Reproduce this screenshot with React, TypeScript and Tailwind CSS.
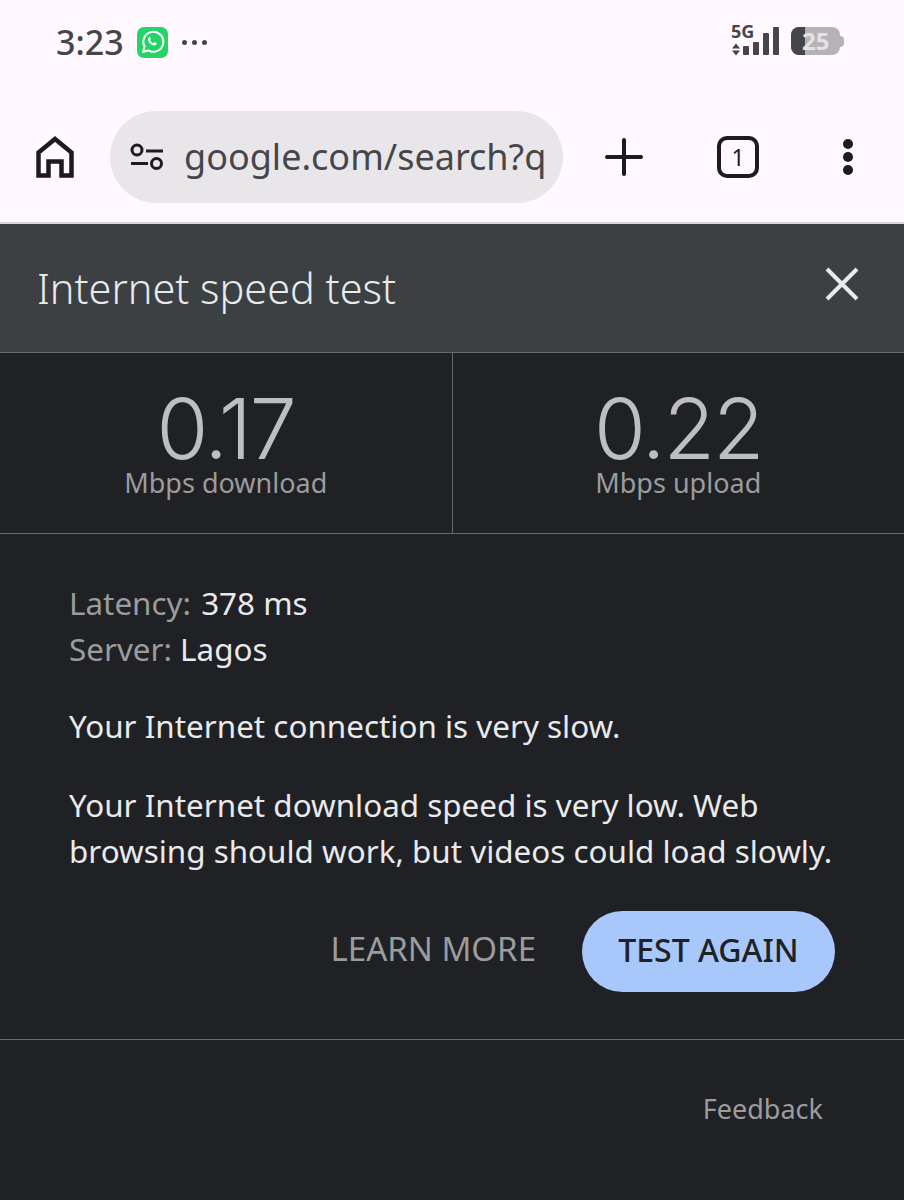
function WhatsAppIcon() {
  return (
    <svg width="31" height="31" viewBox="0 0 31 31">
      <rect width="31" height="31" rx="7" fill="#25d366" />
      <path d="M6 25l1.600-5.400A10 10 0 1 1 11.300 23.400z" fill="none" stroke="#fff" strokeWidth="2" strokeLinejoin="round" />
      <path d="M12 10.500c-1.600 1-1.300 3 .6 5.200 2 2.200 4.300 3.400 6 2.400.8-.5 1.100-1.300 1-1.800l-2.400-1.200-1 1.100c-1.300-.5-2.500-1.700-3.200-3l.9-1-1-2.500c-.3-.1-.6 0-.9-.2z" fill="#fff" />
    </svg>
  )
}

function SignalIcon() {
  return (
    <svg width="48" height="30" viewBox="0 0 48 30" fill="#46464a">
      <path d="M5 16.500l-4 5h8zM5 28.500l-4-5h8z" />
      <rect x="12" y="19" width="6" height="9" rx="1" />
      <rect x="22" y="15" width="6" height="13" rx="1" />
      <rect x="32" y="6" width="6" height="22" rx="1" />
      <rect x="42" y="0" width="6" height="28" rx="1" />
    </svg>
  )
}

function HomeIcon() {
  return (
    <svg width="38" height="42" viewBox="0 0 38 42" fill="none" stroke="#1d1b20" strokeWidth="4.500">
      <path d="M2.500 39.500V16.500L19 3l16.500 13.500v23h-10v-14h-13v14z" />
    </svg>
  )
}

function SiteIcon() {
  return (
    <svg width="34" height="28" viewBox="0 0 34 28" fill="none" stroke="#1d1b20" strokeWidth="3">
      <circle cx="7" cy="7" r="5" />
      <circle cx="26.500" cy="20.500" r="5" />
      <path d="M16 8h17M1 20.500h17" />
    </svg>
  )
}

function PlusIcon() {
  return (
    <svg width="38" height="38" viewBox="0 0 38 38" stroke="#1d1b20" strokeWidth="4" strokeLinecap="round">
      <path d="M19 2v34M2 19h34" />
    </svg>
  )
}

function CloseIcon() {
  return (
    <svg className="-mt-[8px]" width="34" height="34" viewBox="0 0 34 34" stroke="#e8eaed" strokeWidth="4">
      <path d="M2 2l30 30M32 2L2 32" />
    </svg>
  )
}

function MenuDots() {
  return (
    <div className="flex flex-col gap-[3px]">
      <span className="h-[10px] w-[10px] rounded-full bg-[#1d1b20]" />
      <span className="h-[10px] w-[10px] rounded-full bg-[#1d1b20]" />
      <span className="h-[10px] w-[10px] rounded-full bg-[#1d1b20]" />
    </div>
  )
}

function Battery() {
  return (
    <div className="relative flex h-[28px] w-[53px] items-center">
      <div className="flex h-[28px] w-[49px] overflow-hidden rounded-[8px] bg-[#b5b3b7]">
        <div className="h-full w-[14px] bg-[#46464a]" />
      </div>
      <div className="h-[11px] w-[4px] rounded-r-full bg-[#b5b3b7]" />
      <span className="absolute left-[11px] top-0 text-[24px] font-bold leading-[28px] text-[#e4e2e6]">25</span>
    </div>
  )
}

export default function App() {
  return (
    <div className="flex min-h-[1200px] w-[904px] flex-col bg-[#202124] font-[family-name:'Noto_Sans',sans-serif]">
      <div className="bg-[#fff9ff]">
        <div className="flex h-[111px] items-start justify-between pl-[56px] pr-[60px] pt-[27px]">
          <div className="flex items-center">
            <span className="text-[34px] font-medium leading-[31px] text-[#46464a]">3:23</span>
            <div className="ml-[13px]"><WhatsAppIcon /></div>
            <div className="ml-[14px] flex gap-[5px]">
              <span className="h-[5px] w-[5px] rounded-full bg-[#46464a]" />
              <span className="h-[5px] w-[5px] rounded-full bg-[#46464a]" />
              <span className="h-[5px] w-[5px] rounded-full bg-[#46464a]" />
            </div>
          </div>
          <div className="flex items-start gap-[12px]">
            <div className="relative">
              <SignalIcon />
              <span className="absolute left-0 top-[-7px] text-[18px] font-bold leading-[22px] text-[#46464a]">5G</span>
            </div>
            <Battery />
          </div>
        </div>
        <div className="flex h-[92px] items-center">
          <div className="ml-[36px]"><HomeIcon /></div>
          <div className="ml-[36px] flex h-[92px] w-[453px] items-center overflow-hidden rounded-full bg-[#e9e6ea] pl-[20px]">
            <SiteIcon />
            <span className="ml-[20px] whitespace-nowrap text-[36px] leading-[44px] text-[#46464a]">google.com/search?q</span>
          </div>
          <div className="ml-[42px]"><PlusIcon /></div>
          <div className="ml-[74px] flex h-[42px] w-[42px] items-center justify-center rounded-[10px] border-4 border-[#1d1b20] text-[23px] text-[#1d1b20]">1</div>
          <div className="ml-[84px]"><MenuDots /></div>
        </div>
        <div className="h-[19px]" />
      </div>
      <div className="h-[2px] bg-[#d8d6da]" />
      <div className="flex h-[128px] items-center justify-between bg-[#3c4043] pl-[37px] pr-[45px]">
        <span className="text-[41.400px] font-light text-[#e8eaed]">Internet speed test</span>
        <CloseIcon />
      </div>
      <div className="flex h-[182px] border-y border-[#66696d]">
        <div className="flex flex-1 flex-col items-center border-r border-[#66696d] pt-[40px]">
          <span className="font-[family-name:Inter,sans-serif] text-[84px] font-light leading-[72px] tracking-[-2px] text-[#bdbebf]">0.17</span>
          <span className="mt-[3px] text-[27px] leading-[30px] text-[#9b9c9d]">Mbps download</span>
        </div>
        <div className="flex flex-1 flex-col items-center pt-[40px]">
          <span className="font-[family-name:Inter,sans-serif] text-[84px] font-light leading-[72px] tracking-[-2px] text-[#bdbebf]">0.22</span>
          <span className="mt-[3px] text-[27px] leading-[30px] text-[#9b9c9d]">Mbps upload</span>
        </div>
      </div>
      <div className="flex flex-col border-b border-[#66696d] pb-[47px] pl-[69px] pr-[69px] pt-[46px] text-[31.400px] leading-[46px] text-[#e8eaed]">
        <p><span className="text-[#9b9c9d]">Latency: </span><span className="ml-[2px]">378 ms</span></p>
        <p><span className="text-[#9b9c9d]">Server: </span>Lagos</p>
        <p className="mt-[31px]">Your Internet connection is very slow.</p>
        <p className="mt-[33px] whitespace-nowrap">Your Internet download speed is very low. Web<br />browsing should work, but videos could load slowly.</p>
        <div className="mt-[37px] flex items-center justify-end gap-[46px]">
          <span className="-mt-[6px] text-[33px] text-[#9b9c9d]">LEARN MORE</span>
          <div className="flex h-[81px] w-[253px] items-center justify-center rounded-full bg-[#a8c7fa] pb-[3px] text-[32px] font-medium text-[#202124]">TEST AGAIN</div>
        </div>
      </div>
      <div className="flex justify-end pr-[81px] pt-[50px]">
        <span className="text-[27px] leading-[38px] text-[#9b9c9d]">Feedback</span>
      </div>
    </div>
  )
}
